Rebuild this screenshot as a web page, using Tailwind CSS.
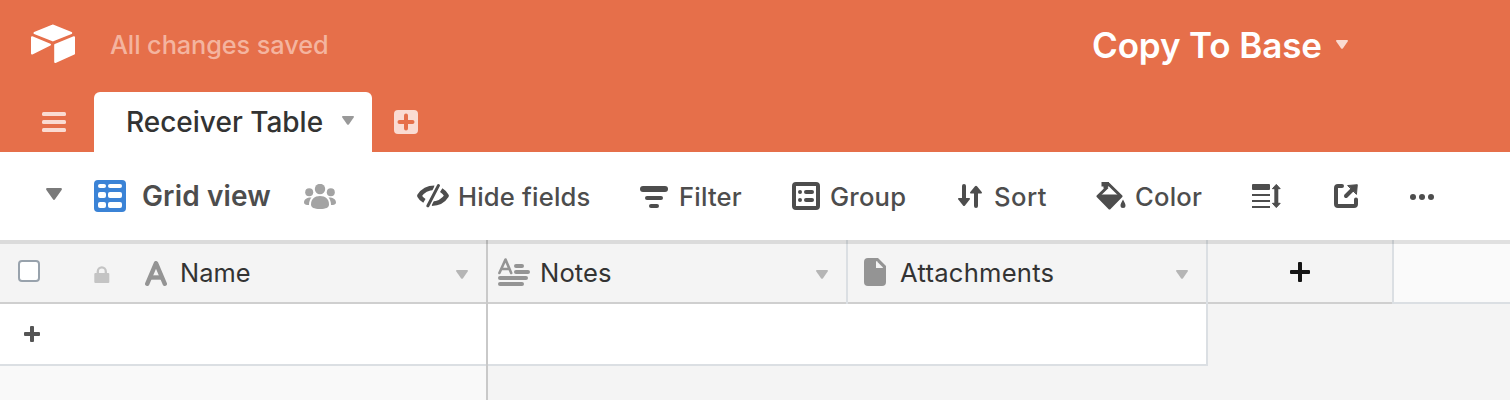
<!DOCTYPE html>
<html lang="en">
<head>
<meta charset="utf-8">
<title>Copy To Base</title>
<script src="https://cdn.jsdelivr.net/npm/@tailwindcss/browser@4"></script>
</head>
<body class="w-[1510px] h-[400px] overflow-hidden bg-[#f4f4f4] font-['Inter',sans-serif] text-[25.6px] leading-[28px] font-[450] whitespace-nowrap text-[#333]">
<header class="h-[152px] bg-[#e66f4a] flex flex-col">
  <div class="h-[92px] flex items-start">
    <svg class="ml-[30px] mt-6 w-[46px] h-10 shrink-0" viewBox="0 0 46 40" fill="#fff" stroke="#fff" stroke-width="2" stroke-linejoin="round"><path d="M22.4 1.7Q22.8 1.5 23.300 1.700L41.200 9L22.900 16.400L4.500 9Z"/><path d="M2 13.300V29.500L20 20.600Z"/><path d="M44 13.300L25.200 20.900V38L44 29.700Z"/></svg>
    <div class="ml-[34px] mt-[31px] w-[982px] text-[25.3px] tracking-[-0.08px] text-[#f4b49f]">All changes saved</div>
    <div class="mt-[25px] w-[235px] text-[35px] leading-[40px] font-semibold tracking-[-0.12px] text-white">Copy To Base</div>
    <svg class="ml-[9px] mt-10 w-3 h-[9px] shrink-0" viewBox="0 0 12 9" fill="#fadbd2"><path d="M1 0H11Q12.500 .2 11.700 1.600L7 8.200Q6 9.400 5 8.200L.3 1.600Q-.5.2 1 0Z"/></svg>
  </div>
  <div class="h-[60px] flex items-start">
    <svg class="ml-[42px] mt-5 w-6 h-5 shrink-0" viewBox="0 0 24 20" fill="#fadbd2"><rect width="24" height="4" rx="1.500"/><rect y="8" width="24" height="4" rx="1.500"/><rect y="16" width="24" height="4" rx="1.500"/></svg>
    <div class="ml-7 w-[278px] h-[60px] rounded-t-[6px] bg-white flex items-start">
      <div class="ml-8 mt-4 w-[216px] text-[28px]">Receiver Table</div>
      <svg class="mt-6 w-3 h-[9px] shrink-0" viewBox="0 0 12 9" fill="#999"><path d="M1 0H11Q12.500 .2 11.700 1.600L7 8.200Q6 9.400 5 8.200L.3 1.600Q-.5.2 1 0Z"/></svg>
    </div>
    <svg class="ml-[22px] mt-[18px] w-6 h-6 shrink-0" viewBox="0 0 24 24"><rect width="24" height="24" rx="4" fill="#fadbd2"/><path d="M12 5.500V18.500M5.500 12H18.500" stroke="#e66f4a" stroke-width="4" stroke-linecap="round"/></svg>
  </div>
</header>

<nav class="h-[88px] bg-white flex items-start text-[#4d4d4d]">
  <svg class="ml-[46px] mt-9 w-4 h-3 shrink-0" viewBox="0 0 16 12" fill="#7a7a7a"><path d="M1.200 0H14.800Q16.500.3 15.600 2L9.200 11Q8 12.800 6.800 11L.4 2Q-.5.3 1.200 0Z"/></svg>
  <svg class="ml-8 mt-7 w-8 h-8 shrink-0" viewBox="0 0 32 32"><rect width="32" height="32" rx="4" fill="#3b83d6"/><g fill="#fff"><rect x="4" y="4" width="8" height="4" rx="2"/><rect x="14" y="4" width="14" height="4" rx="2"/><rect x="4" y="12" width="8" height="6" rx="2"/><rect x="14" y="12" width="14" height="6" rx="2"/><rect x="4" y="22" width="8" height="6" rx="2"/><rect x="14" y="22" width="14" height="6" rx="2"/></g></svg>
  <div class="ml-4 mt-[30px] w-[162px] text-[28px] font-semibold tracking-[0.15px]">Grid view</div>
  <svg class="mt-8 w-8 h-[25px] shrink-0" viewBox="0 0 32 25" fill="#a3a3a3"><circle cx="16" cy="5" r="5.200"/><circle cx="5.200" cy="8.200" r="4"/><circle cx="26.800" cy="8.200" r="4"/><path d="M7 20.500C7 15 10.500 12 16 12S25 15 25 20.500C25 23.500 22 25 16 25S7 23.500 7 20.500Z"/><path d="M0 18.500C0 15.500 2.500 13.500 7.500 13.500C5.800 15.500 5 18 5 21C2 21 0 20.500 0 18.500ZM32 18.500C32 15.500 29.500 13.500 24.500 13.500C26.200 15.500 27 18 27 21C30 21 32 20.500 32 18.500Z"/></svg>
  <svg class="ml-[81px] mt-8 w-8 h-6 shrink-0" viewBox="0 0 32 24" fill="none" stroke="#4d4d4d" stroke-linejoin="round"><path d="M17.500 3.800C10.500 3.800 5.500 7 2.400 11.800C3.600 14 5.300 15.700 7.400 16.900" stroke-width="4.500"/><path d="M24.200 6.200C26.600 7.700 28.500 9.700 29.600 11.800C26.500 16.700 21.500 19.600 14.700 19.800" stroke-width="4.500"/><path d="M21 1.800L11 21.800" stroke="#fff" stroke-width="6"/><path d="M21.400 1.600L10.900 21.800" stroke-width="3" stroke-linecap="round"/></svg>
  <div class="ml-[9px] mt-[31px] w-[182px] tracking-[0.18px]">Hide fields</div>
  <svg class="mt-[34px] w-7 h-[22px] shrink-0" viewBox="0 0 28 22" fill="#4d4d4d"><rect width="28" height="6" rx="3"/><rect x="5" y="10" width="18" height="4" rx="2"/><rect x="9" y="18" width="10" height="4" rx="2"/></svg>
  <div class="ml-[11px] mt-[31px] w-[113px] tracking-[0.2px]">Filter</div>
  <svg class="mt-[30px] w-7 h-7 shrink-0" viewBox="0 0 28 28" fill="#4d4d4d"><rect x="2" y="2" width="24" height="24" rx="2" fill="none" stroke="#4d4d4d" stroke-width="4"/><circle cx="8" cy="10" r="2"/><circle cx="8" cy="18" r="2"/><rect x="12" y="8" width="10" height="4" rx="2"/><rect x="12" y="16" width="10" height="4" rx="2"/></svg>
  <div class="ml-[10px] mt-[31px] w-[128px] tracking-[0.2px]">Group</div>
  <svg class="mt-8 w-6 h-6 shrink-0" viewBox="0 0 24 24" fill="#4d4d4d"><rect x="4" y="0" width="4" height="20" rx="2"/><path d="M.8 14H11.200Q12.500 14.300 11.700 15.600L7 21.500Q6 22.600 5 21.500L.3 15.600Q-.5 14.300.8 14Z"/><rect x="16" y="4" width="4" height="20" rx="2"/><path d="M12.800 9.500H23.200Q24.500 9.200 23.700 7.900L19 2.300Q18 1.200 17 2.300L12.300 7.900Q11.500 9.200 12.800 9.500Z"/></svg>
  <div class="ml-[12px] mt-[31px] w-[102px] tracking-[0.5px]">Sort</div>
  <svg class="mt-[30px] w-[30px] h-7 shrink-0" viewBox="0 0 30 28"><path d="M6 2H12.500L25 14.300L13.500 26L2 14.300L11.500 5" fill="none" stroke="#4d4d4d" stroke-width="3" stroke-linejoin="round"/><path d="M2 12.500H25V14.500L13.500 26L2 14.500Z" fill="#4d4d4d"/><path d="M5.500 0H13V4L9.500 6.500H7.500V4.500H5.500Z" fill="#4d4d4d"/><path d="M27 17.500C28.500 20.500 29.500 21.800 29.500 23.500A2.500 2.500 0 0 1 24.500 23.500C24.500 21.800 25.500 20.500 27 17.500Z" fill="#4d4d4d"/></svg>
  <div class="ml-[9px] mt-[31px] w-[117px] tracking-[0.2px]">Color</div>
  <svg class="mt-8 w-[29px] h-6 shrink-0" viewBox="0 0 29 24" fill="#4d4d4d"><rect width="18" height="6" rx="1"/><rect y="10" width="18" height="2"/><rect y="16" width="18" height="2"/><rect y="22" width="18" height="2"/><rect x="22.300" y="3" width="4" height="18"/><path d="M24.300 .4L28.200 4.700H20.400ZM24.300 23.600L28.200 19.300H20.400Z" stroke="#4d4d4d" stroke-linejoin="round" stroke-width="1"/></svg>
  <svg class="ml-[53px] mt-8 w-6 h-6 shrink-0" viewBox="0 0 24 24" fill="none" stroke="#4d4d4d" stroke-width="4" stroke-linecap="round"><path d="M8 2H4Q2 2 2 4V20Q2 22 4 22H20Q22 22 22 20V15.500"/><path d="M12 12L18 6"/><path d="M14 1.500L23.300 .7L22.500 10Z" fill="#4d4d4d" stroke-width="1" stroke-linejoin="round"/></svg>
  <svg class="ml-[52px] mt-[42px] w-6 h-6 shrink-0" viewBox="0 0 24 24" fill="#4d4d4d"><circle cx="3" cy="3" r="3"/><circle cx="12" cy="3" r="3"/><circle cx="21" cy="3" r="3"/></svg>
</nav>

<main class="relative h-[160px]">
  <div class="h-16 flex font-normal">
    <div class="w-[488px] h-16 bg-[#f4f4f4] border-b-2 border-b-[#cfcfcf] flex items-start">
      <div class="ml-[18px] mt-5 w-[22px] h-[22px] rounded-[4px] border-2 border-[#98a2ac] bg-white"></div>
      <svg class="ml-[54px] mt-[26px] w-4 h-[17px] shrink-0" viewBox="0 0 16 17" fill="#c4c4c4"><rect x=".3" y="7" width="15" height="10" rx="1"/><path d="M3.800 8V5.400A4 4 0 0 1 11.800 5.400V8" fill="none" stroke="#c4c4c4" stroke-width="2.300"/></svg>
      <svg class="ml-[35px] mt-[21px] w-[22px] h-[25px] shrink-0" viewBox="0 0 22 25" fill="none" stroke="#949494" stroke-width="4.400" stroke-linecap="round" stroke-linejoin="round"><path d="M2.200 22.800L11 2.200L19.800 22.800"/><path d="M5.500 16.500H16.500" stroke-linecap="butt"/></svg>
      <div class="ml-[13px] mt-[19px] w-[276px] text-[25.4px]">Name</div>
      <svg class="mt-[30px] w-3 h-[9px] shrink-0" viewBox="0 0 12 9" fill="#b5b5b5"><path d="M1 0H11Q12.500 .2 11.700 1.600L7 8.200Q6 9.400 5 8.200L.3 1.600Q-.5.2 1 0Z"/></svg>
    </div>
    <div class="w-[360px] h-16 bg-[#f4f4f4] border-b-2 border-b-[#cfcfcf] flex items-start">
      <svg class="ml-[10px] mt-[18px] w-8 h-7 shrink-0" viewBox="0 0 32 28" fill="#949494"><path d="M1.400 15L7.500 1.500L13.200 15M3.500 11H11.500" fill="none" stroke="#949494" stroke-width="2.600" stroke-linecap="round" stroke-linejoin="round"/><rect x="16" y="6" width="10" height="4" rx="2"/><rect x="16" y="12" width="16" height="4" rx="2"/><rect y="18" width="30" height="4" rx="2"/><rect y="24" width="26" height="4" rx="2"/></svg>
      <div class="ml-[10px] mt-[19px] w-[276px] tracking-[0.1px]">Notes</div>
      <svg class="mt-[30px] w-3 h-[9px] shrink-0" viewBox="0 0 12 9" fill="#b5b5b5"><path d="M1 0H11Q12.500 .2 11.700 1.600L7 8.200Q6 9.400 5 8.200L.3 1.600Q-.5.2 1 0Z"/></svg>
      <div class="ml-[18px] w-[2px] h-16 bg-[#dbdfe3]"></div>
    </div>
    <div class="w-[360px] h-16 bg-[#f4f4f4] border-b-2 border-b-[#cfcfcf] flex items-start">
      <svg class="ml-4 mt-[18px] w-[22px] h-7 shrink-0" viewBox="0 0 22 28"><path d="M4 0H14L22 8V24Q22 28 18 28H4Q0 28 0 24V4Q0 0 4 0Z" fill="#949494"/><path d="M12 3.500Q12 2.800 12.700 3.300L18.800 9.200Q19.200 10 18.500 10H12Z" fill="#f4f4f4"/></svg>
      <div class="ml-[14px] mt-[19px] w-[276px] tracking-[0.25px]">Attachments</div>
      <svg class="mt-[30px] w-3 h-[9px] shrink-0" viewBox="0 0 12 9" fill="#b5b5b5"><path d="M1 0H11Q12.500 .2 11.700 1.600L7 8.200Q6 9.400 5 8.200L.3 1.600Q-.5.2 1 0Z"/></svg>
      <div class="ml-[18px] w-[2px] h-16 bg-[#dbdfe3]"></div>
    </div>
    <div class="w-[186px] h-16 bg-[#f4f4f4] border-b-2 border-b-[#cfcfcf] flex items-start">
      <svg class="ml-[82px] mt-[22px] w-5 h-5 shrink-0" viewBox="0 0 20 20" fill="#151515"><rect x="8" width="4" height="20" rx="1"/><rect y="8" width="20" height="4" rx="1"/></svg>
      <div class="ml-[82px] w-[2px] h-16 bg-[#dbdfe3]"></div>
    </div>
    <div class="flex-1 h-16 bg-[#fafafa] border-b-2 border-b-[#dbdfe3]"></div>
  </div>
  <div class="w-[1208px] h-[62px] bg-white border-b-2 border-r-2 border-[#dbdfe3] flex items-start">
    <svg class="ml-6 mt-[22px] w-4 h-4 shrink-0" viewBox="0 0 16 16" fill="#555"><rect x="6" width="4" height="16" rx="1"/><rect y="6" width="16" height="4" rx="1"/></svg>
  </div>
  <div class="w-[486px] h-[34px] bg-[#f9f9f9]"></div>
  <div class="absolute left-[486px] top-0 w-[2px] h-[160px] bg-[#c9c9c9]"></div>
  <div class="absolute left-0 top-0 w-full h-1 bg-black/10"></div>
</main>
</body>
</html>
